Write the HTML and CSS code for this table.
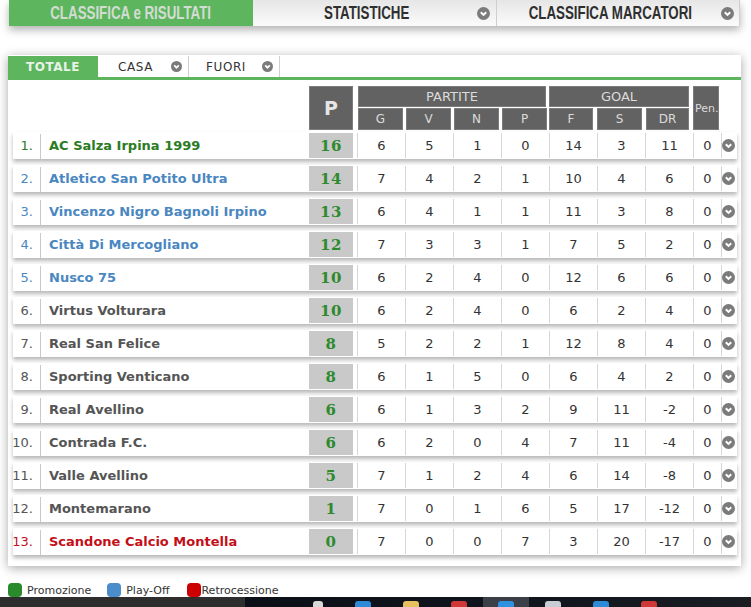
FILE: index.html
```html
<!DOCTYPE html>
<html lang="it">
<head>
<meta charset="utf-8">
<title>Classifica</title>
<link rel="stylesheet" href="styles.css">
</head>
<body>
<div class="topbar">
  <div class="ttab active"><span class="ttext"><span class="tlabel">CLASSIFICA e RISULTATI</span></span></div>
  <div class="ttab"><span class="ttext"><span class="tlabel">STATISTICHE</span></span><svg class="chev" width="13" height="13" viewBox="0 0 13 13"><circle cx="6.5" cy="6.5" r="6.5" fill="#7b7b7b"/><path d="M3.8 5.2 L6.5 7.9 L9.2 5.2" fill="none" stroke="#fff" stroke-width="2"/></svg></div>
  <div class="ttab"><span class="ttext"><span class="tlabel">CLASSIFICA MARCATORI</span></span><svg class="chev" width="13" height="13" viewBox="0 0 13 13"><circle cx="6.5" cy="6.5" r="6.5" fill="#7b7b7b"/><path d="M3.8 5.2 L6.5 7.9 L9.2 5.2" fill="none" stroke="#fff" stroke-width="2"/></svg></div>
</div>

<div class="panel">
  <div class="subtabs">
    <div class="stab active">TOTALE</div>
    <div class="stab casa"><span class="stext">CASA</span><svg class="schev" width="11" height="11" viewBox="0 0 11 11"><circle cx="5.5" cy="5.5" r="5.5" fill="#7b7b7b"/><path d="M3.2 4.4 L5.5 6.7 L7.8 4.4" fill="none" stroke="#fff" stroke-width="1.7"/></svg></div>
    <div class="stab fuori"><span class="stext">FUORI</span><svg class="schev" width="11" height="11" viewBox="0 0 11 11"><circle cx="5.5" cy="5.5" r="5.5" fill="#7b7b7b"/><path d="M3.2 4.4 L5.5 6.7 L7.8 4.4" fill="none" stroke="#fff" stroke-width="1.7"/></svg></div>
  </div>

  <div class="thead">
    <div class="h hp">P</div>
    <div class="h hgroup hpart">PARTITE</div>
    <div class="h hgroup hgoal">GOAL</div>
    <div class="h hpen">Pen.</div>
    <div class="h hs c5">G</div>
    <div class="h hs c6">V</div>
    <div class="h hs c7">N</div>
    <div class="h hs c8">P</div>
    <div class="h hs c9">F</div>
    <div class="h hs c10">S</div>
    <div class="h hs c11">DR</div>
  </div>

  <div class="rows" id="rows"></div>
</div>

<div class="legend">
  <div class="li"><span class="sq green"></span>Promozione</div>
  <div class="li"><span class="sq blue"></span>Play-Off</div>
  <div class="li"><span class="sq red"></span>Retrocessione</div>
</div>

<div class="taskbar">
  <div class="tb-left"></div>
  <div class="tb-right">
    <span class="ic ic-w first"></span>
    <span class="ic ic-b"></span>
    <span class="ic ic-y"></span>
    <span class="ic ic-r"></span>
    <span class="tile"><span class="ic ic-b2"></span></span>
    <span class="ic ic-w2"></span>
    <span class="ic ic-b"></span>
    <span class="ic ic-r"></span>
  </div>
</div>

<script src="app.js"></script>
</body>
</html>
```

FILE: app.js
```js
var data = [
  [1, "AC Salza Irpina 1999", 16, 6, 5, 1, 0, 14, 3, 11, 0, "green"],
  [2, "Atletico San Potito Ultra", 14, 7, 4, 2, 1, 10, 4, 6, 0, "blue"],
  [3, "Vincenzo Nigro Bagnoli Irpino", 13, 6, 4, 1, 1, 11, 3, 8, 0, "blue"],
  [4, "Città Di Mercogliano", 12, 7, 3, 3, 1, 7, 5, 2, 0, "blue"],
  [5, "Nusco 75", 10, 6, 2, 4, 0, 12, 6, 6, 0, "blue"],
  [6, "Virtus Volturara", 10, 6, 2, 4, 0, 6, 2, 4, 0, "gray"],
  [7, "Real San Felice", 8, 5, 2, 2, 1, 12, 8, 4, 0, "gray"],
  [8, "Sporting Venticano", 8, 6, 1, 5, 0, 6, 4, 2, 0, "gray"],
  [9, "Real Avellino", 6, 6, 1, 3, 2, 9, 11, -2, 0, "gray"],
  [10, "Contrada F.C.", 6, 6, 2, 0, 4, 7, 11, -4, 0, "gray"],
  [11, "Valle Avellino", 5, 7, 1, 2, 4, 6, 14, -8, 0, "gray"],
  [12, "Montemarano", 1, 7, 0, 1, 6, 5, 17, -12, 0, "gray"],
  [13, "Scandone Calcio Montella", 0, 7, 0, 0, 7, 3, 20, -17, 0, "red"]
];
var chev = '<svg width="13" height="13" viewBox="0 0 13 13"><circle cx="6.5" cy="6.5" r="6.5" fill="#7b7b7b"/><path d="M3.8 5.2 L6.5 7.9 L9.2 5.2" fill="none" stroke="#fff" stroke-width="2"/></svg>';
var html = "";
data.forEach(function (r) {
  html += '<div class="row ' + r[11] + '">' +
    '<div class="rank">' + r[0] + '.</div>' +
    '<div class="name">' + r[1] + '</div>' +
    '<div class="pts">' + r[2] + '</div>' +
    '<div class="sp"></div>';
  for (var i = 3; i <= 10; i++) html += '<div class="num">' + r[i] + '</div>';
  html += '<div class="arr">' + chev + '</div></div>';
});
document.getElementById("rows").innerHTML = html;
```

FILE: styles.css
```css
html, body {
  margin: 0;
  height: 607px;
  overflow: hidden;
  background: #fff;
  font-family: "DejaVu Sans", Verdana, sans-serif;
}

/* top tab bar */
.topbar {
  display: flex;
  margin-left: 9px;
  width: 731px;
  height: 26px;
  box-shadow: 0 4px 8px rgba(0, 0, 0, 0.3);
}
.ttab {
  width: 244px;
  display: flex;
  align-items: center;
  background: linear-gradient(#e6e6e6, #fbfbfb);
  border-right: 1px solid #cfcfcf;
  box-sizing: border-box;
  color: #2f2f2f;
}
.ttab:last-child { width: 243px; }
.ttab .ttext {
  flex: 1;
  text-align: center;
  padding-left: 3px;
  white-space: nowrap;
}
.ttab .tlabel {
  display: inline-block;
  font-family: "Liberation Sans", Arial, sans-serif;
  font-weight: bold;
  font-size: 18px;
  line-height: 20px;
  transform: scaleX(0.74);
}
.ttab.active {
  background: #5db65d;
  color: #d3dcd3;
  border-right: none;
}
.ttab.active .ttext { padding-left: 0; }
.ttab .chev { margin-right: 6px; flex: none; }

/* panel */
.panel {
  margin: 29px 0 0 8px;
  width: 733px;
  height: 511px;
  box-sizing: border-box;
  padding-top: 1px;
  background: #fff;
  box-shadow: 0 2px 10px rgba(0, 0, 0, 0.35);
}
.subtabs {
  display: flex;
  height: 21px;
  border-bottom: 3px solid #5db65d;
}
.stab {
  display: flex;
  align-items: center;
  box-sizing: border-box;
  border-right: 1px solid #cfcfcf;
  font-size: 12px;
  letter-spacing: 0.6px;
  color: #333;
}
.stab.active {
  width: 90px;
  justify-content: center;
  background: #5db65d;
  color: #e9f2e9;
  font-weight: bold;
  letter-spacing: 0.5px;
  border-right: none;
}
.stab.casa { width: 91px; padding-left: 20px; }
.stab.fuori { width: 91px; padding-left: 17px; }
.stab .stext { flex: 1; }
.stab .schev { margin-right: 6px; }

/* header */
.thead, .row {
  display: grid;
  grid-template-columns: 28px 268px 44px 4px repeat(7, 48px) 28px 16px;
}
.thead {
  margin: 6px 0 0 5px;
  grid-template-rows: 21px 22px;
  row-gap: 1px;
}
.h {
  background: #626262;
  border: 1px solid #7c7c7c;
  box-sizing: border-box;
  color: #dcdcdc;
  display: flex;
  align-items: center;
  justify-content: center;
  font-size: 12px;
}
.hp {
  grid-column: 3;
  grid-row: 1 / 3;
  font-weight: bold;
  font-size: 19px;
  color: #e6e6e6;
}
.hpart { grid-column: 5 / 9; grid-row: 1; margin: 0 3px 0 1px; font-size: 13px; }
.hgoal { grid-column: 9 / 12; grid-row: 1; margin: 0 4px 0 0; font-size: 13px; }
.hpen { grid-column: 12; grid-row: 1 / 3; margin-right: 2px; font-size: 11px; justify-content: flex-start; padding-left: 1px; }
.hs { grid-row: 2; margin: 0 2px 0 1px; }
.c5 { grid-column: 5; }
.c6 { grid-column: 6; }
.c7 { grid-column: 7; }
.c8 { grid-column: 8; }
.c9 { grid-column: 9; margin-left: 0; margin-right: 4px; }
.c10 { grid-column: 10; margin-left: 0; margin-right: 3px; }
.c11 { grid-column: 11; margin-left: 1px; margin-right: 4px; }

/* rows */
.rows { margin: 2px 0 0 5px; width: 724px; }
.row {
  height: 27px;
  margin-bottom: 6px;
  background: #fff;
  box-shadow: 0 3px 4px rgba(0, 0, 0, 0.28);
  align-items: center;
  font-size: 13px;
  color: #333;
}
.rank {
  align-self: stretch;
  margin: 2px 0 0;
  padding-right: 7px;
  border-right: 1px solid #c9c9c9;
  display: flex;
  align-items: center;
  justify-content: flex-end;
  padding-bottom: 2px;
}
.name { padding-left: 8px; font-weight: bold; }
.row.green .rank, .row.green .name { color: #2a7b24; }
.row.blue .rank, .row.blue .name { color: #4a87c1; }
.row.gray .rank, .row.gray .name { color: #555; }
.row.red .rank, .row.red .name { color: #c30f18; }
.pts {
  align-self: stretch;
  margin: 1px 0;
  background: #c9c9c9;
  color: #2e8a2e;
  font-family: "DejaVu Serif", Georgia, serif;
  font-weight: bold;
  font-size: 15px;
  letter-spacing: 0.5px;
  display: flex;
  align-items: center;
  justify-content: center;
}
.num, .arr {
  align-self: stretch;
  border-left: 1px solid #d6d6d6;
  display: flex;
  align-items: center;
  justify-content: center;
  margin: 1px 0;
}
.arr svg { margin-left: -2px; }

/* legend */
.legend {
  display: flex;
  margin: 17px 0 0 8px;
  height: 14px;
  font-size: 11px;
  color: #333;
  gap: 16px;
}
.li { display: flex; align-items: center; }
.sq {
  width: 14px;
  height: 14px;
  border-radius: 4px;
  margin-right: 5px;
}
.sq.green { background: #2b8a2b; }
.sq.blue { background: #4b8cca; }
.sq.red { background: #cc0000; margin-right: 0; }
.li:nth-child(3) { margin-left: 2px; }

/* taskbar */
.taskbar {
  display: flex;
  height: 10px;
}
.tb-left { width: 245px; background: #2e2e2e; }
.tb-right {
  flex: 1;
  background: linear-gradient(90deg, #0a0f18, #11161e 60%, #1a1d22);
  display: flex;
  align-items: flex-end;
  gap: 32px;
}
.ic {
  width: 16px;
  height: 6px;
  border-radius: 3px 3px 0 0;
  display: block;
}
.ic.first { margin-left: 68px; }
.ic-w { background: #d8d8d8; width: 10px; }
.ic-w2 { background: #c8ccd4; }
.ic-b { background: #2c8ad8; }
.ic-b2 { background: #2f92e0; }
.ic-y { background: #e8c060; }
.ic-r { background: #d03838; }
.tile {
  width: 46px;
  height: 10px;
  background: #3a3f48;
  display: flex;
  justify-content: center;
  align-items: flex-end;
  margin: 0 -16px;
}
```
